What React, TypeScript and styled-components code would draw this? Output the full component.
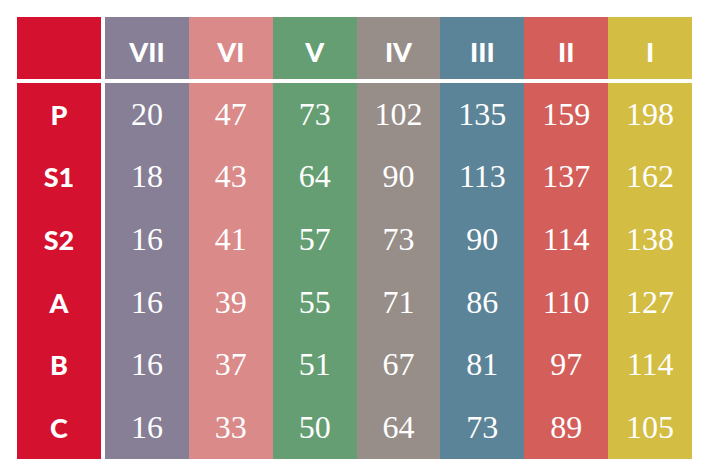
import React from "react";
import styled, { createGlobalStyle } from "styled-components";

const GlobalStyle = createGlobalStyle`
  html, body {
    margin: 0;
    padding: 0;
    background: #ffffff;
  }
`;

const classes = [
  { name: "VII", color: "#877f96", values: [20, 18, 16, 16, 16, 16] },
  { name: "VI", color: "#d98a89", values: [47, 43, 41, 39, 37, 33] },
  { name: "V", color: "#649e72", values: [73, 64, 57, 55, 51, 50] },
  { name: "IV", color: "#988e89", values: [102, 90, 73, 71, 67, 64] },
  { name: "III", color: "#5b8498", values: [135, 113, 90, 86, 81, 73] },
  { name: "II", color: "#d45e5a", values: [159, 137, 114, 110, 97, 89] },
  { name: "I", color: "#d4bd43", values: [198, 162, 138, 127, 114, 105] },
];

const rows = ["P", "S1", "S2", "A", "B", "C"];

const App = () => {
  return (
    <Wrapper>
      <GlobalStyle />
      <Table>
        <Corner />
        {classes.map((c) => (
          <HeadCell key={c.name} bg={c.color}>
            {c.name}
          </HeadCell>
        ))}
        {rows.map((r, i) => (
          <React.Fragment key={r}>
            <RowLabel>{r}</RowLabel>
            {classes.map((c) => (
              <ValueCell key={c.name} bg={c.color}>
                {c.values[i]}
              </ValueCell>
            ))}
          </React.Fragment>
        ))}
      </Table>
    </Wrapper>
  );
};

const Wrapper = styled.div`
  width: 709px;
  height: 476px;
  padding: 17px 0 0 17px;
  box-sizing: border-box;
`;

const Table = styled.div`
  display: grid;
  width: 675px;
  height: 442px;
  grid-template-columns: 88px repeat(7, 1fr);
  grid-template-rows: 66px repeat(6, 1fr);
`;

const Cell = styled.div`
  display: flex;
  align-items: center;
  justify-content: center;
  color: #ffffff;
`;

interface BgProps {
  bg: string;
}

const Corner = styled(Cell)`
  background: #d4112f;
  margin: 0 4px 4px 0;
`;

const HeadCell = styled(Cell)<BgProps>`
  background: ${(p) => p.bg};
  margin-bottom: 4px;
  padding-top: 7px;
  font-family: Lato, "Noto Sans", sans-serif;
  font-weight: 900;
  font-size: 27px;
`;

const RowLabel = styled(Cell)`
  background: #d4112f;
  margin-right: 4px;
  font-family: Lato, "Noto Sans", sans-serif;
  font-weight: 900;
  font-size: 27px;
`;

const ValueCell = styled(Cell)<BgProps>`
  background: ${(p) => p.bg};
  font-family: "Liberation Serif", "DejaVu Serif", serif;
  font-size: 32px;
`;

export default App;
